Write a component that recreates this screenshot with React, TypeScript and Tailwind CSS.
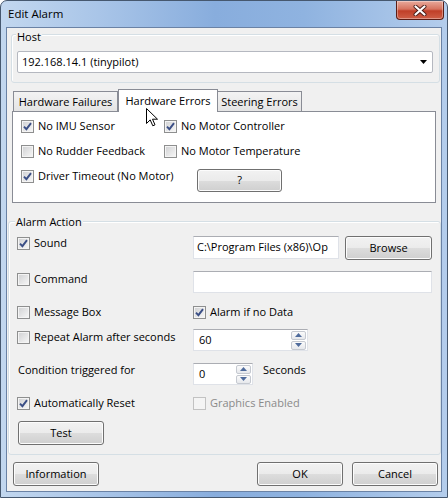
import React from "react"

function Check({ checked = false, disabled = false }: { checked?: boolean; disabled?: boolean }) {
  return (
    <span
      className={`flex h-[13px] w-[13px] shrink-0 items-center justify-center border ${
        disabled
          ? "border-[#c2c2c2] bg-[#f4f4f4]"
          : "border-[#8e8f8f] bg-[linear-gradient(135deg,#cfd0d2,#f8f8f8)] shadow-[inset_0_0_0_1px_#f4f4f4]"
      }`}
    >
      {checked && (
        <svg width="11" height="11" viewBox="0 0 11 11">
          <path d="M2 5.6 L4.4 8.2 L9 2.2" fill="none" stroke="#3b4f86" strokeWidth="1.9" />
        </svg>
      )}
    </span>
  )
}

function CheckLabel({ label, checked, disabled }: { label: string; checked?: boolean; disabled?: boolean }) {
  return (
    <div className="flex items-center gap-[4px] whitespace-nowrap">
      <Check checked={checked} disabled={disabled} />
      <span className={disabled ? "text-[#8a8a8a]" : ""}>{label}</span>
    </div>
  )
}

function Btn({ children, className = "" }: { children: React.ReactNode; className?: string }) {
  return (
    <div
      className={`flex items-center justify-center rounded-[3px] border border-[#707070] bg-[linear-gradient(#f2f2f2_0%,#ebebeb_50%,#dddddd_50%,#cfcfcf_100%)] shadow-[inset_0_0_0_1px_#fcfcfc] ${className}`}
    >
      {children}
    </div>
  )
}

function SpinArrow({ up }: { up?: boolean }) {
  return (
    <div className="flex h-[9px] w-[15px] items-center justify-center rounded-[2px] border border-[#c5c9d0] bg-[linear-gradient(#fbfbfb,#e6e8ec)]">
      <svg width="7" height="4" viewBox="0 0 7 4">
        <path d={up ? "M0 4 L3.5 0 L7 4 Z" : "M0 0 L3.5 4 L7 0 Z"} fill="#4f6b9c" />
      </svg>
    </div>
  )
}

function Spin({ value, className }: { value: string; className: string }) {
  return (
    <div className={`flex h-[22px] items-center border border-[#dfe2e8] border-t-[#abadb3] bg-white pl-[5px] pr-[1px] ${className}`}>
      <span className="flex-1">{value}</span>
      <div className="flex flex-col gap-[1px]">
        <SpinArrow up />
        <SpinArrow />
      </div>
    </div>
  )
}

export default function App() {
  return (
    <div className="relative flex h-[498px] w-[448px] flex-col overflow-hidden rounded-t-[7px] border border-[#46586f] bg-[linear-gradient(90deg,#c2d7ef_0%,#a9c5e8_22%,#88addd_48%,#8fb3e0_68%,#b4cdec_100%)] font-['Open_Sans',sans-serif] text-[11px] text-black">
      {/* title bar */}
      <div className="flex h-[26px] shrink-0 items-start">
        <div className="flex h-[26px] items-center pl-[7px] text-[11.5px]">Edit Alarm</div>
        <div className="ml-auto mr-[3px] flex h-[19px] w-[48px] items-center justify-center rounded-b-[4px] border border-t-0 border-[#5b1d15] bg-[linear-gradient(#e8aa9c_0%,#d6735f_45%,#c03f28_55%,#cf5f47_100%)] shadow-[inset_0_0_0_1px_rgba(255,255,255,0.35)]">
          <svg width="14" height="11" viewBox="0 0 14 11">
            <path d="M2.5 1.5 L11.5 9.5 M11.5 1.5 L2.5 9.5" stroke="#4a1d18" strokeWidth="4" strokeLinecap="round" />
            <path d="M2.5 1.5 L11.5 9.5 M11.5 1.5 L2.5 9.5" stroke="#ffffff" strokeWidth="2.2" strokeLinecap="round" />
          </svg>
        </div>
      </div>

      {/* client area */}
      <div className="mx-[5px] mb-[5px] flex flex-1 flex-col border border-[#6a82a5] bg-[#f0f0f0]">
        {/* Host */}
        <div className="ml-[4px] mt-[6px] h-[49px] w-[429px] rounded-[3px] border border-[#d5dfe5] shadow-[inset_1px_1px_0_#ffffff]">
          <div className="-mt-[6px] ml-[4px] w-fit bg-[#f0f0f0] px-[1px] leading-[15px]">Host</div>
          <div className="ml-[5px] mt-[7px] flex h-[22px] w-[416px] items-center rounded-[2px] border border-[#b5b8c0] bg-white pl-[4px] pr-[5px]">
            <span className="flex-1">192.168.14.1 (tinypilot)</span>
            <svg width="7" height="4" viewBox="0 0 7 4">
              <path d="M0 0 L7 0 L3.5 4 Z" fill="#000" />
            </svg>
          </div>
        </div>

        {/* tabs */}
        <div className="ml-[5px] mt-[6px] flex h-[22px] items-end">
          <div className="ml-[1px] flex h-[20px] w-[105px] items-center justify-center border border-b-0 border-[#898c95] bg-[linear-gradient(#f3f3f3,#e4e4e4)] pt-[2px]">
            Hardware Failures
          </div>
          <div className="relative z-10 -mb-px flex h-[23px] w-[100px] items-center justify-center border border-b-0 border-[#898c95] bg-white">
            Hardware Errors
          </div>
          <div className="flex h-[20px] w-[84px] items-center justify-center border border-b-0 border-l-0 border-[#898c95] bg-[linear-gradient(#f3f3f3,#e4e4e4)] pt-[2px]">
            Steering Errors
          </div>
        </div>
        <div className="ml-[5px] flex h-[92px] w-[424px] flex-col border border-[#898c95] bg-white pl-[8px] pt-[2px]">
          <div className="flex h-[25px] items-center">
            <div className="w-[143px]">
              <CheckLabel label="No IMU Sensor" checked />
            </div>
            <CheckLabel label="No Motor Controller" checked />
          </div>
          <div className="flex h-[25px] items-center">
            <div className="w-[143px]">
              <CheckLabel label="No Rudder Feedback" />
            </div>
            <CheckLabel label="No Motor Temperature" />
          </div>
          <div className="flex h-[25px] items-center">
            <div className="w-[143px]">
              <CheckLabel label="Driver Timeout (No Motor)" checked />
            </div>
            <Btn className="ml-[33px] mt-[8px] h-[23px] w-[85px]">?</Btn>
          </div>
        </div>

        {/* Alarm Action */}
        <div className="ml-[1px] mt-[18px] flex h-[234px] w-[433px] flex-col rounded-[3px] border border-[#d5dfe5] shadow-[inset_1px_1px_0_#ffffff]">
          <div className="-mt-[8px] ml-[6px] w-fit bg-[#f0f0f0] px-[1px] leading-[15px]">Alarm Action</div>

          <div className="mt-[7px] flex items-start pl-[8px]">
            <div className="flex h-[15px] w-[176px] items-center">
              <CheckLabel label="Sound" checked />
            </div>
            <div className="flex h-[23px] w-[146px] items-center whitespace-nowrap border border-[#dfe2e8] border-t-[#abadb3] bg-white pl-[3px]">
              C:\Program Files (x86)\Op
            </div>
            <Btn className="ml-[6px] h-[24px] w-[87px]">Browse</Btn>
          </div>

          <div className="mt-[11px] flex items-start pl-[8px]">
            <div className="mt-[1px] flex h-[15px] w-[176px] items-center">
              <CheckLabel label="Command" />
            </div>
            <div className="h-[22px] w-[239px] border border-[#dfe2e8] border-t-[#abadb3] bg-white" />
          </div>

          <div className="mt-[12px] flex h-[15px] items-center pl-[8px]">
            <div className="w-[176px]">
              <CheckLabel label="Message Box" />
            </div>
            <CheckLabel label="Alarm if no Data" checked />
          </div>

          <div className="mt-[9px] flex items-start pl-[8px]">
            <div className="mt-[1px] flex h-[15px] w-[176px] items-center">
              <CheckLabel label="Repeat Alarm after seconds" />
            </div>
            <Spin value="60" className="w-[115px]" />
          </div>

          <div className="mt-[12px] flex items-start pl-[8px]">
            <div className="flex h-[15px] w-[176px] items-center pl-[1px]">Condition triggered for</div>
            <Spin value="0" className="w-[60px]" />
            <div className="ml-[10px] flex h-[15px] items-center">Seconds</div>
          </div>

          <div className="mt-[11px] flex h-[15px] items-center pl-[8px]">
            <div className="w-[176px]">
              <CheckLabel label="Automatically Reset" checked />
            </div>
            <CheckLabel label="Graphics Enabled" disabled />
          </div>

          <div className="mt-[10px] pl-[9px]">
            <Btn className="h-[24px] w-[86px]">Test</Btn>
          </div>
        </div>

        {/* buttons */}
        <div className="mt-[7px] flex">
          <Btn className="ml-[6px] h-[24px] w-[86px]">Information</Btn>
          <Btn className="ml-auto h-[24px] w-[86px]">OK</Btn>
          <Btn className="ml-[9px] mr-[3px] h-[24px] w-[86px]">Cancel</Btn>
        </div>
      </div>

      {/* mouse pointer */}
      <svg className="absolute left-[145px] top-[107px] z-20" width="13" height="19" viewBox="0 0 13 19">
        <path
          d="M0.5 0.5 V15.5 L4.2 11.9 L6.8 17.8 L9 16.8 L6.5 11.2 H11.5 Z"
          fill="#ffffff"
          stroke="#000000"
          strokeWidth="1"
          strokeLinejoin="round"
        />
      </svg>
    </div>
  )
}
